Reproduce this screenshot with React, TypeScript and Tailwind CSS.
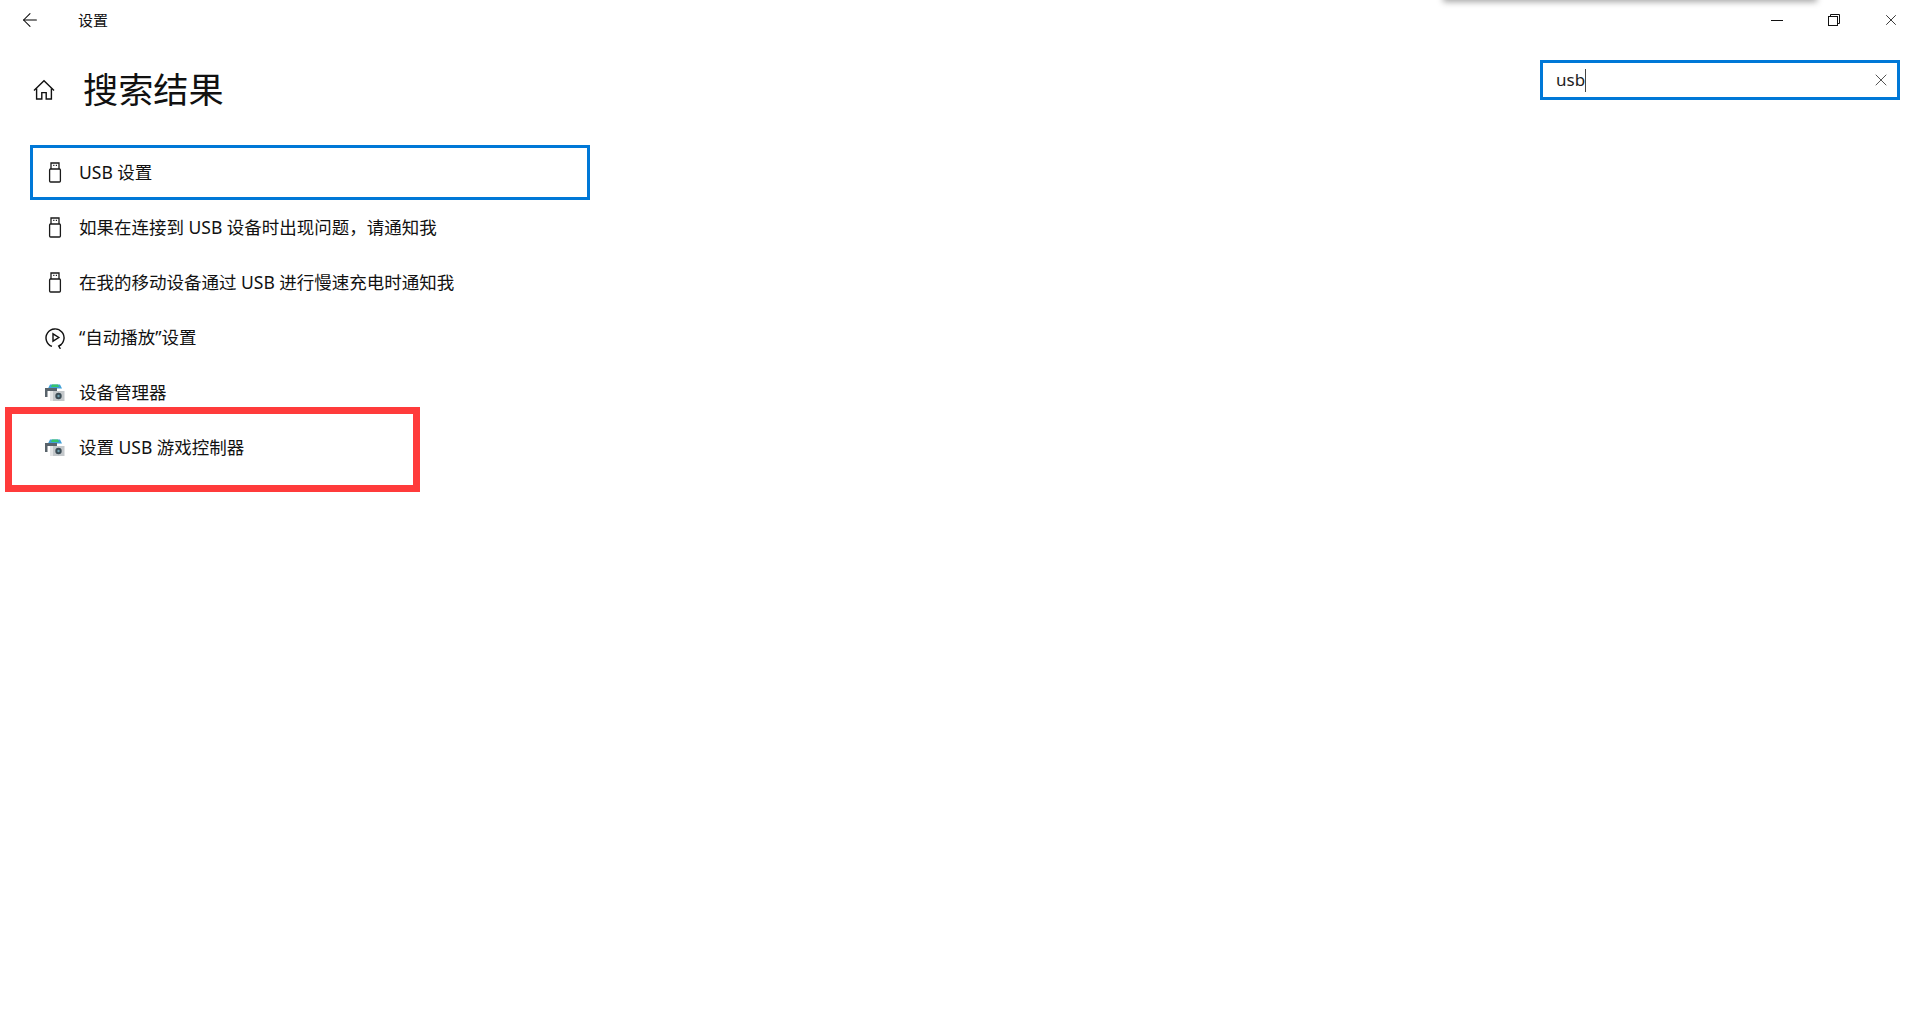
import { ArrowLeft, X } from "lucide-react";

const FONT = "font-['Noto_Sans','Noto_Sans_CJK_SC',sans-serif]";

const UsbIcon = () => (
  <svg width="14" height="21" viewBox="0 0 14 21" fill="none" stroke="#1a1a1a" strokeWidth="1.3">
    <path d="M3 7V1h8v6" />
    <rect x="1.6" y="7" width="10.8" height="13" rx="1" />
    <path d="M5.2 3.4h1.2M7.8 3.4h1.2" />
  </svg>
);

const AutoPlayIcon = () => (
  <svg width="22" height="22" viewBox="0 0 22 22" fill="none" stroke="#111" strokeWidth="1.4">
    <path d="M8 19.4A9 9 0 1 1 15 19" />
    <path d="M9 6.8v7.4l5.8-3.7z" />
    <path d="M17.5 17.5l-2.8 1.6 1.7 2.7" />
  </svg>
);

const DeviceIcon = () => (
  <svg width="20" height="17" viewBox="0 0 20 17">
    <path d="M3 4.5 5 .5h10l2 4z" fill="#3f9fd8" />
    <path d="M7 .5h6l1 2.5H6z" fill="#35c46a" />
    <rect x="0" y="4" width="12" height="3" fill="#59636b" />
    <rect x="0" y="7" width="2.5" height="6" fill="#59636b" />
    <rect x="5" y="7" width="14.5" height="10" fill="#c4c8cb" />
    <rect x="5" y="7" width="3" height="10" fill="#e3e5e6" />
    <circle cx="13.5" cy="12" r="3.2" fill="#3b4c55" />
    <circle cx="13.5" cy="12" r="1.2" fill="#6f9fb0" />
  </svg>
);

const RestoreIcon = () => (
  <svg width="12" height="12" viewBox="0 0 12 12" fill="none" stroke="#111" strokeWidth="1">
    <rect x="0.5" y="2.5" width="9" height="9" />
    <path d="M2.5 2.5V.5h9v9h-2" />
  </svg>
);

const HomeIcon = () => (
  <svg width="22" height="22" viewBox="0 0 22 22" fill="none" stroke="#111" strokeWidth="1.4">
    <path d="M1 11.5 11 1.8l10 9.7" />
    <path d="M3.6 9.5V20h5.2v-6.4h4.4V20h5.2V9.5" />
  </svg>
);

const results = [
  { icon: <UsbIcon />, label: "USB 设置", focused: true },
  { icon: <UsbIcon />, label: "如果在连接到 USB 设备时出现问题，请通知我" },
  { icon: <UsbIcon />, label: "在我的移动设备通过 USB 进行慢速充电时通知我" },
  { icon: <AutoPlayIcon />, label: "“自动播放”设置" },
  { icon: <DeviceIcon />, label: "设备管理器" },
  { icon: <DeviceIcon />, label: "设置 USB 游戏控制器" },
];

export default function App() {
  return (
    <div className={`${FONT} relative h-[1030px] w-[1920px] overflow-hidden bg-white text-[#111]`}>
      {/* shadow of the window behind */}
      <div className="absolute left-[1445px] top-[-6px] h-[6px] w-[370px] shadow-[0_0_6px_2px_rgba(0,0,0,0.35)]" />

      {/* Title bar */}
      <div className="flex h-[40px] items-center">
        <div className="flex w-[78px] pl-[19px]">
          <ArrowLeft size={22} strokeWidth={1.1} className="text-black" />
        </div>
        <span className="text-[15px]">设置</span>
        <div className="ml-auto flex items-center">
          <div className="flex w-[57px] justify-center pr-[1px]">
            <span className="h-[1px] w-[12px] bg-[#111]" />
          </div>
          <div className="flex w-[57px] justify-center pr-[2px]">
            <RestoreIcon />
          </div>
          <div className="flex w-[57px] justify-center pr-[1px]">
            <X size={18} strokeWidth={1.1} />
          </div>
        </div>
      </div>

      {/* Header */}
      <div className="mt-[20px] flex h-[60px] items-start pr-[20px]">
        <div className="mt-[19px] flex w-[83px] pl-[33px]">
          <HomeIcon />
        </div>
        <h1 className="mt-[12px] text-[35.2px] font-normal leading-none">搜索结果</h1>
        <div className="ml-auto flex h-[40px] w-[360px] items-center border-[3px] border-[#0078d7] pl-[13px] pr-[6px]">
          <span className="text-[17px] text-[#222]">usb</span>
          <span className="h-[23px] w-[1px] bg-[#444]" />
          <X size={20} strokeWidth={1} className="ml-auto text-[#333]" />
        </div>
      </div>

      {/* Results */}
      <div className="ml-[30px] mt-[25px] flex w-[560px] flex-col">
        {results.map((r) => (
          <div
            key={r.label}
            className={`flex h-[55px] items-center ${r.focused ? "border-[3px] border-[#0078d7] pl-[8px]" : "pl-[11px]"}`}
          >
            <div className="flex w-[38px] justify-center pr-[10px]">{r.icon}</div>
            <span className="text-[17.5px]">{r.label}</span>
          </div>
        ))}
      </div>

      {/* Red annotation */}
      <div className="absolute left-[5px] top-[407px] h-[85px] w-[415px] border-[7px] border-[#ff3b3b]" />
    </div>
  );
}
